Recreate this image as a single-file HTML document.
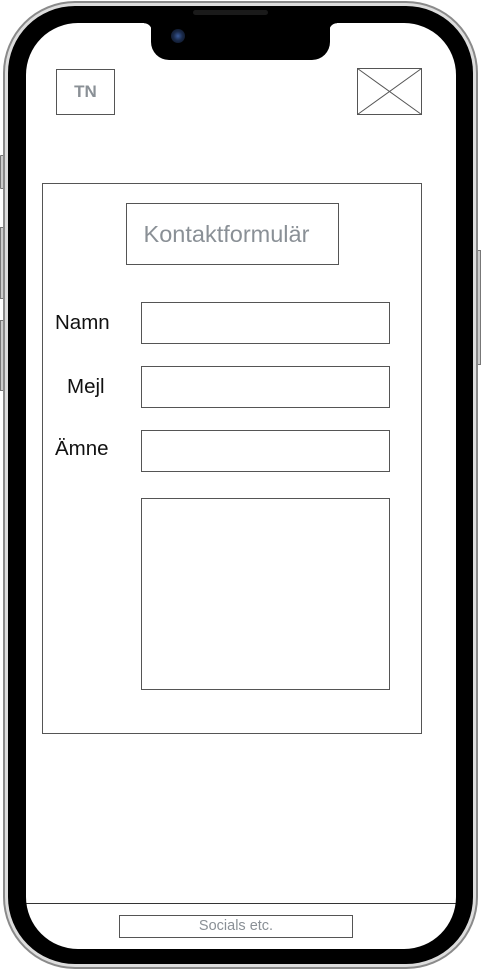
<!DOCTYPE html>
<html><head><meta charset="utf-8"><style>
*{margin:0;padding:0;box-sizing:border-box}
body{width:481px;height:972px;background:#fff;position:relative;overflow:hidden;font-family:"Liberation Sans",Arial,sans-serif}
.a{position:absolute}
.bx{position:absolute;border:1px solid #555;background:#fff}
.lbl{position:absolute;font-size:20.5px;color:#111}
</style></head><body>
<div class="a" style="left:0;top:155px;width:5px;height:34px;background:#ccc;border:1px solid #777;border-radius:1px"></div>
<div class="a" style="left:0;top:227px;width:5px;height:72px;background:#ccc;border:1px solid #777"></div>
<div class="a" style="left:0;top:320px;width:5px;height:71px;background:#ccc;border:1px solid #777"></div>
<div class="a" style="left:476px;top:250px;width:5px;height:115px;background:#ccc;border:1px solid #777"></div>
<div class="a" style="left:3px;top:1px;width:475px;height:968px;border-radius:72px;background:#8a8a8a"></div>
<div class="a" style="left:5px;top:3px;width:471px;height:964px;border-radius:70px;background:#ddd"></div>
<div class="a" style="left:8px;top:6px;width:465px;height:958px;border-radius:67px;background:#000"></div>
<div class="a" style="left:26px;top:23px;width:430px;height:926px;border-radius:52px;background:#fff;overflow:hidden">
  <div class="a" style="left:0;top:880px;width:430px;height:1px;background:#333"></div>
</div>
<div class="a" style="left:151px;top:20px;width:179px;height:40px;background:#000;border-radius:0 0 18px 18px"></div>
<div class="a" style="left:144px;top:23px;width:8px;height:8px;background:radial-gradient(circle at 0 100%,transparent 7.5px,#000 8px)"></div>
<div class="a" style="left:329px;top:23px;width:8px;height:8px;background:radial-gradient(circle at 100% 100%,transparent 7.5px,#000 8px)"></div>
<div class="a" style="left:193px;top:10px;width:75px;height:5px;border-radius:3px;background:#1a1a1a"></div>
<div class="a" style="left:171px;top:29px;width:14px;height:14px;border-radius:50%;background:radial-gradient(circle,#3a5a9a 0,#1a2a4a 45%,#0a0f1a 100%)"></div>
<div class="bx" style="left:56px;top:69px;width:59px;height:46px;text-align:center;line-height:44px;font-weight:bold;font-size:17px;color:#8a9096">TN</div>
<svg class="a" style="left:357px;top:68px" width="65" height="47"><rect x="0.5" y="0.5" width="64" height="46" fill="#fff" stroke="#555"/><path d="M0.5 0.5L64.5 46.5M64.5 0.5L0.5 46.5" stroke="#555"/></svg>
<div class="bx" style="left:42px;top:183px;width:380px;height:551px"></div>
<div class="bx" style="left:126px;top:203px;width:213px;height:62px;text-align:center;line-height:60px;font-size:23.5px;color:#8a9096;padding-right:12px">Kontaktformulär</div>
<div class="lbl" style="left:55px;top:311px">Namn</div>
<div class="lbl" style="left:67px;top:375px">Mejl</div>
<div class="lbl" style="left:55px;top:437px">Ämne</div>
<div class="bx" style="left:141px;top:302px;width:249px;height:42px"></div>
<div class="bx" style="left:141px;top:366px;width:249px;height:42px"></div>
<div class="bx" style="left:141px;top:430px;width:249px;height:42px"></div>
<div class="bx" style="left:141px;top:498px;width:249px;height:192px"></div>
<div class="bx" style="left:119px;top:915px;width:234px;height:23px;text-align:center;line-height:20px;font-size:14.5px;color:#8a9096">Socials etc.</div>
</body></html>
